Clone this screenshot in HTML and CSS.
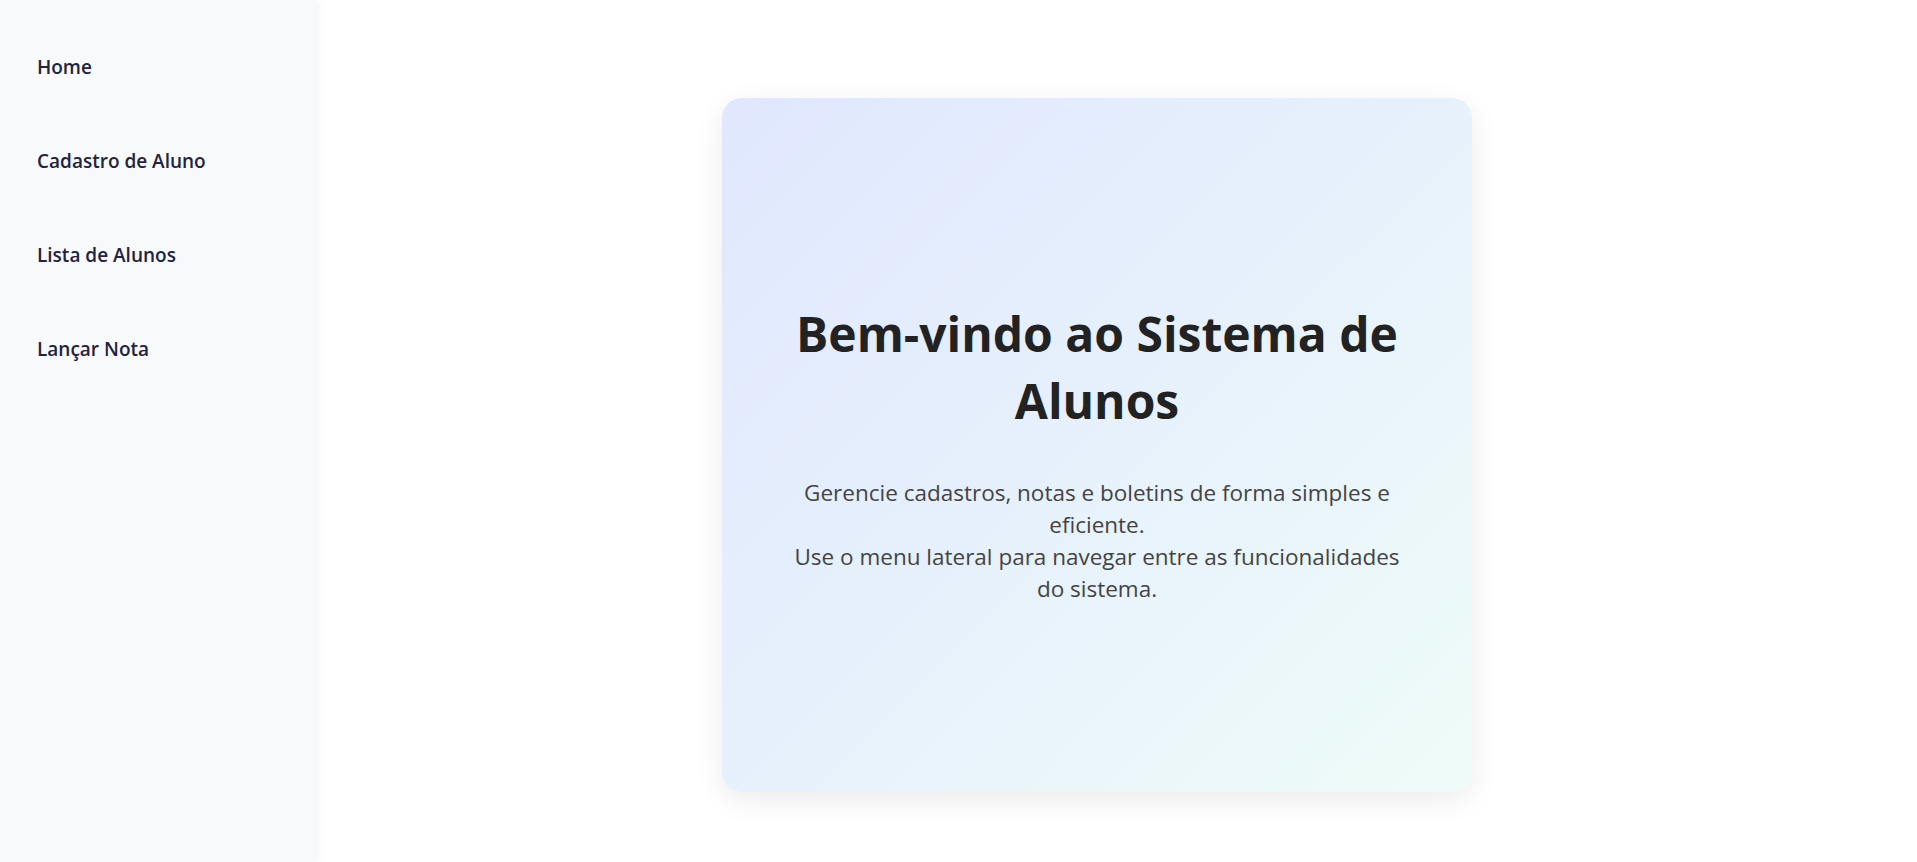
FILE: index.html
```html
<!DOCTYPE html>
<html lang="pt-BR">
<head>
<meta charset="utf-8">
<title>Sistema de Alunos</title>
<link rel="stylesheet" href="styles.css">
</head>
<body>
<div class="layout">
  <aside class="sidebar">
    <nav class="nav">
      <a class="nav-link" href="#">Home</a>
      <a class="nav-link" href="#">Cadastro de Aluno</a>
      <a class="nav-link" href="#">Lista de Alunos</a>
      <a class="nav-link" href="#">Lançar Nota</a>
    </nav>
  </aside>
  <main class="main">
    <section class="card">
      <h1 class="title">Bem-vindo ao Sistema de Alunos</h1>
      <p class="lead">Gerencie cadastros, notas e boletins de forma simples e eficiente.<br>Use o menu lateral para navegar entre as funcionalidades do sistema.</p>
    </section>
  </main>
</div>
</body>
</html>
```

FILE: styles.css
```css
* { box-sizing: border-box; }
html, body { margin: 0; padding: 0; height: 100%; }
body {
  font-family: "Open Sans", "Noto Sans", "Liberation Sans", sans-serif;
  background: #ffffff;
  color: #222;
}
.layout {
  display: flex;
  height: 100vh;
}
.sidebar {
  width: 315px;
  flex-shrink: 0;
  background: #f8f9fb;
  box-shadow: 2px 0 10px rgba(0, 0, 0, 0.06);
  position: relative;
  z-index: 1;
}
.nav {
  display: flex;
  flex-direction: column;
  padding-top: 20px;
}
.nav-link {
  display: block;
  padding: 35px 37px;
  line-height: 24px;
  font-size: 19px;
  font-weight: 600;
  color: #23233d;
  text-decoration: none;
}
.main {
  flex: 1;
  display: flex;
  justify-content: center;
  align-items: flex-start;
  padding: 98px 38px 0 0;
}
.card {
  width: 750px;
  height: 694px;
  border-radius: 20px;
  background: linear-gradient(135deg, #e0e7fe 0%, #e7f1fc 50%, #effcf8 100%);
  box-shadow: 0 8px 28px rgba(0, 0, 0, 0.08);
  display: flex;
  flex-direction: column;
  justify-content: center;
  align-items: center;
  text-align: center;
  padding: 14px 64px 0;
}
.title {
  margin: 0 0 43px;
  font-size: 48px;
  line-height: 67px;
  font-weight: 700;
  color: #222222;
  max-width: 622px;
}
.lead {
  margin: 0;
  font-size: 22.5px;
  line-height: 32px;
  color: #444444;
  max-width: 622px;
}
```
